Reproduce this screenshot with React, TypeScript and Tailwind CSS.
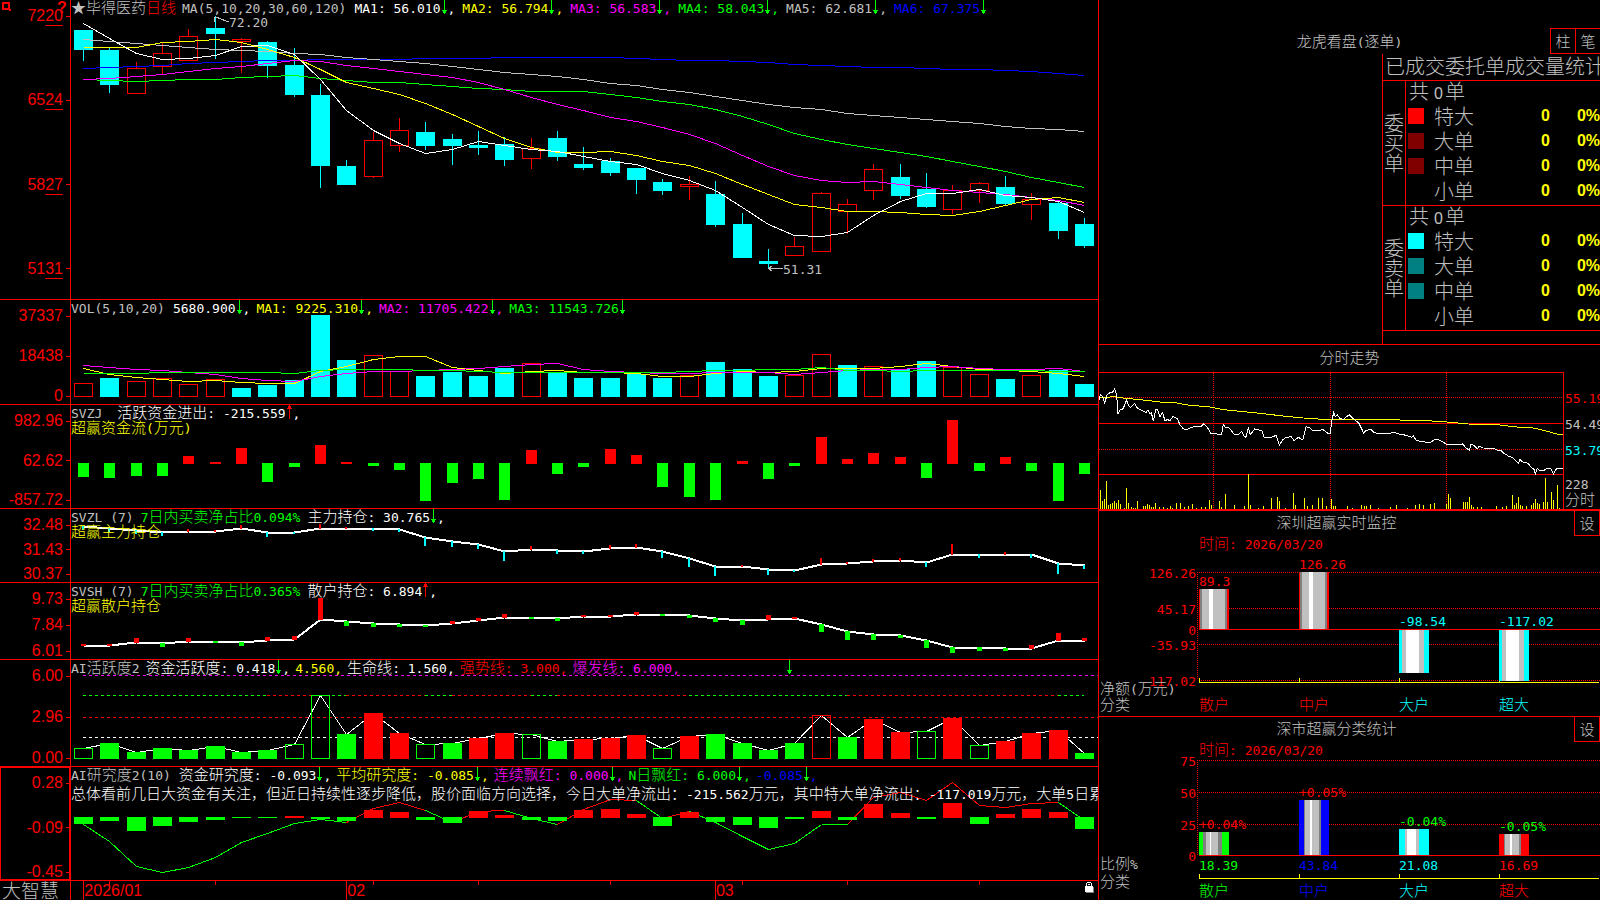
import type { ReactNode } from 'react';
import { clsx } from 'clsx';

const RED = '#ff0000';
const CYAN = '#00ffff';
const GREEN = '#00ff00';
const YELLOW = '#ffff00';
const MAGENTA = '#ff00ff';
const BLUE = '#0000ff';
const SILVER = '#c0c0c0';
const GRAY = '#808080';
const WHITE = '#ffffff';

const PLOT_W = 1027;
const cx = (i: number) => 12 + Math.round(26.34 * i);

// [kind, high, open/close top, open/close bottom, low]
const candles: [string, number, number, number, number][] = [
  ['c', 30, 30, 50, 61], ['c', 47, 50, 85, 93], ['r', 62, 68, 93, 93], ['r', 42, 53, 66, 74], ['r', 29, 36, 60, 60],
  ['c', 16, 28, 34, 59], ['r', 38, 39, 41, 73], ['c', 41, 42, 66, 78], ['c', 48, 65, 95, 97], ['c', 84, 95, 166, 188],
  ['c', 160, 166, 185, 185], ['r', 132, 140, 176, 178], ['r', 118, 130, 145, 152], ['c', 122, 132, 146, 150], ['c', 134, 139, 146, 165],
  ['c', 131, 145, 148, 155], ['c', 137, 144, 160, 166], ['r', 138, 148, 158, 169], ['c', 131, 138, 157, 161], ['c', 147, 164, 168, 170],
  ['c', 158, 161, 173, 176], ['c', 168, 168, 180, 194], ['c', 179, 182, 191, 195], ['r', 176, 184, 186, 200], ['c', 181, 194, 225, 227],
  ['c', 213, 224, 258, 258], ['c', 249, 261, 264, 268], ['r', 237, 246, 255, 255], ['r', 192, 193, 251, 251], ['r', 199, 204, 211, 234],
  ['r', 164, 169, 190, 200], ['c', 164, 177, 196, 199], ['c', 173, 189, 207, 208], ['r', 185, 190, 209, 214], ['r', 182, 183, 190, 203],
  ['c', 176, 187, 204, 205], ['r', 193, 199, 204, 220], ['c', 201, 203, 231, 239], ['c', 218, 224, 246, 248],
];

const priceLines: [string, number[]][] = [
  [BLUE, [68, 67, 66, 65, 63, 62, 61, 60, 60, 59, 59, 59, 59, 58, 58, 58, 57, 57, 57, 57, 57, 58, 59, 60, 60, 61, 62, 64, 65, 66, 67, 67, 68, 69, 69, 70, 71, 73, 75]],
  [SILVER, [39, 41, 43, 45, 47, 49, 50, 51, 53, 54, 57, 59, 61, 63, 66, 69, 72, 74, 76, 79, 83, 85, 89, 92, 96, 100, 104, 107, 109, 113, 115, 117, 119, 121, 123, 126, 128, 129, 131]],
  [GREEN, [79, 80, 81, 80, 79, 79, 77, 76, 75, 78, 80, 82, 82, 84, 86, 88, 89, 91, 91, 91, 94, 97, 101, 104, 109, 116, 124, 133, 139, 144, 148, 152, 156, 161, 166, 171, 177, 182, 187]],
  [MAGENTA, [79, 78, 76, 74, 71, 68, 66, 63, 60, 61, 65, 68, 71, 74, 77, 82, 89, 97, 104, 110, 117, 121, 127, 134, 143, 155, 166, 175, 180, 182, 181, 184, 187, 190, 192, 194, 197, 200, 205]],
  [YELLOW, [47, 47, 47, 42, 41, 39, 42, 49, 57, 69, 82, 88, 94, 103, 114, 126, 138, 147, 152, 152, 151, 155, 161, 165, 173, 184, 194, 204, 207, 211, 211, 212, 214, 215, 211, 205, 199, 197, 202]],
  [WHITE, [23, 38, 53, 59, 58, 55, 46, 45, 54, 79, 110, 130, 143, 153, 149, 141, 145, 149, 151, 156, 161, 164, 173, 180, 190, 207, 224, 235, 236, 232, 215, 201, 193, 193, 189, 195, 197, 201, 212]],
];

const volumeTops = [83, 78, 81, 78, 84, 79, 88, 85, 80, 15, 60, 55, 71, 76, 72, 76, 68, 63, 72, 78, 78, 74, 78, 75, 62, 69, 76, 75, 54, 65, 66, 69, 61, 67, 74, 79, 75, 70, 84];
const volumeUp = [0, 2, 3, 4, 5, 11, 12, 17, 23, 27, 28, 30, 33, 34, 36];

const volumeLines: [string, number[]][] = [
  [YELLOW, [68, 74, 77, 79, 81, 80, 82, 83, 83, 71, 66, 59, 56, 56, 67, 70, 73, 71, 70, 72, 72, 73, 76, 76, 73, 71, 72, 71, 68, 68, 68, 66, 63, 66, 69, 70, 71, 73, 76]],
  [MAGENTA, [65, 67, 69, 70, 72, 74, 78, 80, 81, 76, 73, 71, 71, 70, 69, 68, 66, 64, 63, 69, 71, 72, 73, 73, 72, 72, 72, 74, 72, 70, 69, 69, 67, 66, 68, 69, 69, 68, 71]],
  [GREEN, [73, 73, 73, 72, 72, 72, 72, 72, 73, 70, 69, 69, 69, 70, 70, 71, 72, 72, 72, 72, 72, 72, 72, 71, 70, 70, 69, 69, 67, 70, 70, 71, 70, 70, 70, 70, 70, 71, 71]],
];

const flowEnds = [72, 73, 71, 71, 51, 57, 43, 77, 62, 40, 57, 61, 65, 96, 78, 74, 95, 45, 69, 62, 44, 50, 82, 92, 95, 56, 74, 61, 32, 54, 48, 52, 73, 15, 66, 52, 66, 96, 69];

const mainLine = [17, 19, 21, 23, 22, 22, 19, 23, 23, 19, 19, 19, 20, 28, 32, 35, 42, 40, 41, 42, 39, 38, 42, 49, 57, 57, 60, 61, 55, 54, 52, 51, 53, 45, 45, 45, 45, 54, 56];
// end of the tick hanging from each point of the line
const mainTicks = [20, 22, 24, 26, 20, 21, 16, 27, 24, 15, 18, 21, 22, 36, 37, 39, 51, 37, 44, 44, 36, 35, 48, 57, 66, 56, 65, 62, 49, 53, 50, 49, 57, 35, 48, 43, 48, 64, 59];

const retailLine = [62, 62, 59, 60, 58, 58, 59, 57, 56, 36, 38, 40, 41, 42, 40, 37, 34, 34, 35, 33, 33, 31, 31, 32, 35, 37, 36, 35, 41, 48, 51, 52, 57, 64, 64, 65, 65, 57, 57];
const retailTicks = [61, 61, 55, 63, 55, 59, 62, 54, 53, 15, 42, 43, 43, 43, 38, 35, 31, 35, 37, 32, 32, 29, 32, 34, 38, 41, 32, 34, 48, 56, 56, 54, 64, 69, 67, 67, 62, 50, 55];

const activity = [88, 83, 92, 88, 90, 86, 92, 90, 84, 35, 74, 53, 73, 84, 83, 78, 73, 74, 81, 79, 78, 75, 88, 76, 74, 83, 90, 83, 55, 77, 59, 72, 71, 58, 85, 81, 73, 70, 93];
const activityRed = [11, 12, 15, 16, 19, 20, 21, 23, 28, 30, 31, 33, 35, 36, 37];
const activityHollow = [0, 8, 9, 13, 17, 22, 28, 32, 34];
// colour runs of the upper dashed line, as column ranges
const activityRuns: [number, number, string][] = [
  [0, 7, GREEN], [7, 9, RED], [9, 10, GREEN], [10, 13, RED], [13, 14, GREEN], [14, 17, RED],
  [17, 18, GREEN], [18, 23, RED], [23, 29, GREEN], [29, 37, RED], [37, 38, GREEN],
];

const researchEnds = [57, 54, 64, 59, 55, 53, 51, 51, 49, 52, 54, 43, 45, 53, 56, 44, 48, 53, 54, 43, 42, 47, 59, 45, 55, 58, 61, 52, 44, 53, 37, 46, 52, 36, 57, 47, 42, 45, 62];
const researchLine = [57, 74, 99, 105, 100, 90, 75, 66, 56, 52, 55, 41, 35, 43, 55, 44, 43, 51, 57, 42, 32, 33, 51, 44, 55, 69, 82, 76, 57, 57, 30, 25, 33, 15, 38, 40, 36, 35, 53];
const researchGreen = [0, 1, 2, 3, 4, 5, 6, 7, 8, 9, 13, 16, 17, 21, 23, 24, 25, 26, 27, 28, 37];

const intradayAvg = '27,173 75,170 100,174 160,180 210,186 260,189 300,196 355,200 400,209 470,216 520,221 570,227 640,234 700,238 890,239 1010,242 1070,246 1135,252 1230,255 1280,261 1330,264 1365,272 1400,282 1418,283';
const intradayPrice =
  '27,180 31,163 38,170 44,188 52,163 60,158 68,156 74,146 80,165 84,221 90,210 98,208 104,195 109,179 116,197 122,203 134,190 142,204 150,208 160,213 168,218 174,210 180,222 184,218 190,243 197,208 203,210 210,230 218,218 225,243 232,238 240,243 248,230 262,235 270,255 280,266 290,270 303,262 315,260 335,258 341,252 352,262 362,280 372,279 383,283 395,282 400,253 406,262 418,264 432,282 445,283 455,275 462,288 468,292 475,262 481,284 494,267 516,272 522,292 545,292 558,286 568,315 578,300 588,292 604,290 612,302 625,292 638,300 648,260 660,264 668,273 688,272 698,268 712,279 720,282 726,240 731,218 736,230 742,225 750,235 760,238 778,224 790,236 800,244 808,252 821,279 828,272 842,268 852,277 865,282 885,279 895,282 910,277 930,283 950,286 965,292 970,288 978,300 990,304 1020,308 1035,298 1048,300 1058,306 1070,313 1118,312 1128,324 1138,331 1143,313 1152,316 1162,326 1168,318 1180,324 1210,325 1222,331 1232,330 1242,340 1255,348 1270,354 1285,370 1290,358 1298,366 1314,370 1325,384 1332,388 1336,402 1342,385 1350,392 1360,392 1368,387 1383,386 1390,402 1397,388 1405,385 1418,385';
const intradayVolume: [number, number][] = [
  [30, 450], [36, 482], [42, 477], [48, 423], [54, 495], [60, 492], [66, 489], [72, 483], [78, 489], [84, 480], [90, 492], [102, 504], [108, 444], [114, 489], [123, 500], [129, 504], [135, 504], [141, 483],
  [159, 498], [165, 498], [171, 492], [177, 495], [183, 500], [189, 500], [195, 489], [207, 500], [219, 502], [231, 504], [240, 498], [246, 504], [258, 489], [270, 489], [282, 502], [294, 498], [306, 492], [318, 504], [333, 502], [345, 502],
  [357, 480], [363, 495], [387, 483], [393, 500], [405, 462], [432, 495], [462, 498], [474, 402], [480, 495], [504, 504], [519, 498], [543, 474], [561, 471], [567, 483], [585, 504], [609, 459], [615, 495], [642, 474], [651, 498], [666, 495],
  [684, 474], [696, 474], [708, 498], [723, 477], [729, 498], [735, 498], [771, 498], [786, 504], [813, 495], [822, 498], [828, 498], [840, 495], [864, 504], [900, 500], [918, 495], [951, 504], [975, 495], [987, 492], [999, 495], [1020, 492], [1032, 489],
  [1068, 492], [1074, 462], [1080, 474], [1119, 486], [1125, 486], [1131, 486], [1137, 471], [1143, 495], [1149, 500], [1161, 502], [1173, 500], [1218, 498], [1236, 500], [1248, 498], [1266, 465], [1272, 495], [1278, 489], [1284, 471], [1290, 495],
  [1296, 498], [1308, 498], [1323, 495], [1329, 489], [1335, 477], [1341, 489], [1347, 492], [1359, 486], [1365, 414], [1371, 486], [1383, 456], [1389, 480], [1401, 435], [1407, 504],
];

const split = (text: string) => text.split(/([\x20-\x7e]+)/).filter(Boolean);
const isLatin = (s: string) => /^[\x20-\x7e]/.test(s);

// Chinese at 15px with half-width runs in a mono face next to it
function Song({ text }: { text: string }) {
  return (
    <>
      {split(text).map((s, i) =>
        isLatin(s) ? <span key={i} className="font-['DejaVu_Sans_Mono',monospace] text-[13px] leading-none">{s}</span> : s
      )}
    </>
  );
}

function SvgSong({ x, y, fill, end, text }: { x: number; y: number; fill: string; end?: boolean; text: string }) {
  return (
    <text x={x} y={y} fill={fill} textAnchor={end ? 'end' : 'start'} className="text-[15px]">
      {split(text).map((s, i) =>
        isLatin(s) ? <tspan key={i} className="font-['DejaVu_Sans_Mono',monospace] text-[13px]">{s}</tspan> : <tspan key={i}>{s}</tspan>
      )}
    </text>
  );
}

function Arrow({ up }: { up?: boolean }) {
  return (
    <svg viewBox="0 0 5 14" className="mx-px h-[14px] w-[5px] shrink-0" shapeRendering="crispEdges" fill={up ? RED : GREEN}>
      <path d={up ? 'M2 0h1v14H2zM1 2h3v1H1zM0 3h5v1H0zM1 1h3v1H1z' : 'M2 0h1v14H2zM1 11h3v1H1zM0 10h5v1H0zM1 12h3v1H1z'} />
    </svg>
  );
}

interface SegProps {
  text: string;
  className: string;
  dir?: 'up' | 'down';
  tail?: boolean;
}

function Seg({ text, className, dir, tail }: SegProps) {
  return (
    <span className={clsx('flex shrink-0', className)}>
      <span><Song text={text} /></span>
      {dir && <Arrow up={dir === 'up'} />}
      {tail && <span><Song text="," /></span>}
    </span>
  );
}

function Axis({ labels, className, underline }: { labels: string[]; className?: string; underline?: boolean }) {
  return (
    <div className={clsx("flex w-[70px] shrink-0 flex-col justify-between pt-2 font-['Liberation_Sans',sans-serif] text-base font-normal leading-4 text-[#f00]", className)}>
      {labels.map((l) => (
        <div key={l} className="flex h-4 items-center justify-end gap-[3px]">
          {underline ? (
            <span>{l.slice(0, 2)}<span className="underline underline-offset-4">{l.slice(2)}</span></span>
          ) : (
            <span>{l}</span>
          )}
          <span className="h-px w-1 bg-[#f00]" />
        </div>
      ))}
    </div>
  );
}

interface PanelProps {
  height: number;
  labels: string[];
  axisClass?: string;
  underline?: boolean;
  header: ReactNode;
  children: ReactNode;
  extra?: ReactNode;
}

function Panel({ height, labels, axisClass, underline, header, children, extra }: PanelProps) {
  return (
    <section className="relative flex min-h-0 overflow-hidden border-b border-[#f00]">
      <Axis labels={labels} className={axisClass} underline={underline} />
      <div className="relative grid min-w-0 flex-1 overflow-hidden border-l border-[#f00]">
        <svg viewBox={`0 0 ${PLOT_W} ${height}`} preserveAspectRatio="none" shapeRendering="crispEdges" className="col-start-1 row-start-1 h-full min-h-0 w-full" fill="none">
          {children}
        </svg>
        <div className="col-start-1 row-start-1 min-w-0 overflow-hidden whitespace-pre leading-[13px]">{header}</div>
      </div>
      {extra}
    </section>
  );
}

function Line({ ys, color, width = 1 }: { ys: number[]; color: string; width?: number }) {
  return <polyline points={ys.map((y, i) => `${cx(i) + 0.5},${y + 0.5}`).join(' ')} stroke={color} strokeWidth={width} />;
}

function Box({ i, top, bottom, color, hollow, w = 19 }: { i: number; top: number; bottom: number; color: string; hollow?: boolean; w?: number }) {
  const x = cx(i) - Math.floor(w / 2);
  if (hollow) return <rect x={x + 0.5} y={top + 0.5} width={w - 1} height={Math.max(bottom - top - 1, 1)} stroke={color} />;
  return <rect x={x} y={top} width={w} height={Math.max(bottom - top, 1)} fill={color} />;
}

function Ticks({ line, ends, down, w }: { line: number[]; ends: number[]; down: string; w: number }) {
  return (
    <>
      {line.map((y, i) => (
        <Box key={i} i={i} w={w} top={Math.min(y, ends[i])} bottom={Math.max(y, ends[i]) + 1} color={ends[i] < y ? RED : down} />
      ))}
    </>
  );
}

function Dashed({ y, color, from = 12, to = PLOT_W }: { y: number; color: string; from?: number; to?: number }) {
  return <line x1={from} x2={to} y1={y + 0.5} y2={y + 0.5} stroke={color} strokeDasharray="3 3" />;
}

function PricePanel() {
  return (
    <Panel
      height={299}
      labels={['7220', '6524', '5827', '5131']}
      axisClass="pb-[22px]"
      underline
      header={
        <div className="flex">
          <Seg className="text-[#c0c0c0]" text="★毕得医药" />
          <Seg className="text-[#f00]" text="日线" />
          <Seg className="ml-[6px] mr-2 text-[#c0c0c0]" text="MA(5,10,20,30,60,120)" />
          <Seg className="mr-[7px] text-white" text="MA1: 56.010" dir="down" tail />
          <Seg className="mr-[7px] text-[#ff0]" text="MA2: 56.794" dir="down" tail />
          <Seg className="mr-[7px] text-[#f0f]" text="MA3: 56.583" dir="down" tail />
          <Seg className="mr-[7px] text-[#0f0]" text="MA4: 58.043" dir="down" tail />
          <Seg className="mr-[7px] text-[#c0c0c0]" text="MA5: 62.681" dir="down" tail />
          <Seg className="text-[#00f]" text="MA6: 67.375" dir="down" />
        </div>
      }
      extra={
        <>
          <svg viewBox="0 0 9 9" className="absolute left-[2px] top-[2px] h-[9px] w-[9px]" fill="none" stroke={RED} strokeWidth="2" shapeRendering="crispEdges">
            <path d="M1 1h6v6H1zM7 7l2 2" />
          </svg>
          <span className="absolute left-[57px] top-0 font-['Liberation_Sans',sans-serif] text-base font-bold leading-4 text-[#f00]">?</span>
        </>
      }
    >
      {candles.map(([kind, high, top, bottom, low], i) => {
        const color = kind === 'c' ? CYAN : RED;
        return (
          <g key={i}>
            <rect x={cx(i)} y={high} width={1} height={top - high} fill={color} />
            <rect x={cx(i)} y={bottom} width={1} height={low - bottom} fill={color} />
            <Box i={i} top={top} bottom={kind === 'c' ? bottom : bottom + 1} color={color} hollow={kind === 'r'} />
          </g>
        );
      })}
      {priceLines.map(([color, ys]) => <Line key={color} ys={ys} color={color} />)}
      <path d="M143.5 17v5M143.5 17h4M144 17l14 5" stroke={SILVER} />
      <path d="M697 268.5h15M697.5 268.5l4-3M697.5 268.5l4 3" stroke={SILVER} />
      <SvgSong x={158} y={27} fill={SILVER} text="72.20" />
      <SvgSong x={712} y={274} fill={SILVER} text="51.31" />
    </Panel>
  );
}

function VolumePanel() {
  return (
    <Panel
      height={104}
      labels={['37337', '18438', '0']}
      header={
        <div className="flex">
          <Seg className="mr-2 text-[#c0c0c0]" text="VOL(5,10,20)" />
          <Seg className="mr-[6px] text-white" text="5680.900" dir="down" tail />
          <Seg className="mr-[6px] text-[#ff0]" text="MA1: 9225.310" dir="down" tail />
          <Seg className="mr-[6px] text-[#f0f]" text="MA2: 11705.422" dir="down" tail />
          <Seg className="text-[#0f0]" text="MA3: 11543.726" dir="down" />
        </div>
      }
    >
      {volumeTops.map((top, i) => {
        const up = volumeUp.includes(i);
        return <Box key={i} i={i} top={top} bottom={97} color={up ? RED : CYAN} hollow={up} />;
      })}
      {volumeLines.map(([color, ys]) => <Line key={color} ys={ys} color={color} />)}
    </Panel>
  );
}

function FlowPanel() {
  return (
    <Panel
      height={103}
      labels={['982.96', '62.62', '-857.72']}
      header={
        <>
          <div className="flex">
            <Seg className="mr-[15px] text-[#c0c0c0]" text="SVZJ" />
            <Seg className="text-white" text="活跃资金进出: -215.559" dir="up" tail />
          </div>
          <div className="text-[#ff0]"><Song text="超赢资金流(万元)" /></div>
        </>
      }
    >
      {flowEnds.map((y, i) => (
        <Box key={i} i={i} w={11} top={Math.min(y, 58)} bottom={y < 58 ? 59 : y} color={y < 58 ? RED : GREEN} />
      ))}
    </Panel>
  );
}

function HoldPanel({ retail }: { retail?: boolean }) {
  const line = retail ? retailLine : mainLine;
  return (
    <Panel
      height={retail ? 76 : 73}
      labels={retail ? ['9.73', '7.84', '6.01'] : ['32.48', '31.43', '30.37']}
      header={
        <>
          <div className="flex gap-[7px]">
            <Seg className="text-[#c0c0c0]" text={retail ? 'SVSH (7)' : 'SVZL (7)'} />
            <Seg className="text-[#0f0]" text={retail ? '7日内买卖净占比0.365%' : '7日内买卖净占比0.094%'} />
            <Seg className="text-white" text={retail ? '散户持仓: 6.894' : '主力持仓: 30.765'} dir={retail ? 'up' : 'down'} tail />
          </div>
          <div className="text-[#ff0]"><Song text={retail ? '超赢散户持仓' : '超赢主力持仓'} /></div>
        </>
      }
    >
      <Line ys={line} color={WHITE} width={2} />
      {retail ? <Ticks line={line} ends={retailTicks} down={GREEN} w={5} /> : <Ticks line={line} ends={mainTicks} down={CYAN} w={2} />}
    </Panel>
  );
}

function ActivityPanel() {
  return (
    <Panel
      height={106}
      labels={['6.00', '2.96', '0.00']}
      header={
        <div className="flex gap-[5px]">
          <Seg className="mr-px text-[#c0c0c0]" text="AI活跃度2" />
          <Seg className="text-white" text="资金活跃度: 0.418" dir="down" tail />
          <Seg className="text-[#ff0]" text="4.560," />
          <Seg className="text-white" text="生命线: 1.560," />
          <Seg className="text-[#f00]" text="强势线: 3.000," />
          <Seg className="text-[#f0f]" text="爆发线: 6.000," />
          <span className="ml-[101px]"><Arrow /></span>
        </div>
      }
    >
      <Dashed y={15} color={MAGENTA} />
      <Dashed y={57} color={RED} />
      <Dashed y={77} color={WHITE} />
      {activityRuns.map(([a, b, color]) => <Dashed key={a} y={35} from={cx(a)} to={cx(b)} color={color} />)}
      <Line ys={activity} color={WHITE} />
      {activity.map((top, i) => (
        <Box key={i} i={i} top={top} bottom={99} color={activityRed.includes(i) ? RED : GREEN} hollow={activityHollow.includes(i)} />
      ))}
    </Panel>
  );
}

function ResearchPanel() {
  return (
    <Panel
      height={113}
      labels={['0.28', '-0.09', '-0.45']}
      axisClass="outline outline-[#f00] -outline-offset-1"
      header={
        <>
          <div className="flex gap-[5px]">
            <Seg className="mr-[3px] text-[#c0c0c0]" text="AI研究度2(10)" />
            <Seg className="text-white" text="资金研究度: -0.093" dir="down" tail />
            <Seg className="text-[#ff0]" text="平均研究度: -0.085" dir="down" tail />
            <Seg className="text-[#f0f]" text="连续飘红: 0.000" dir="down" tail />
            <Seg className="text-[#0f0]" text="N日飘红: 6.000" dir="down" tail />
            <Seg className="text-[#00f]" text="-0.085" dir="down" tail />
          </div>
          <p className="mt-1 text-white">
            <Song text="总体看前几日大资金有关注，但近日持续性逐步降低，股价面临方向选择，今日大单净流出：-215.562万元，其中特大单净流出：-117.019万元，大单5日累" />
          </p>
        </>
      }
    >
      {researchLine.slice(1).map((y, i) => (
        <line key={i} x1={cx(i) + 0.5} y1={researchLine[i] + 0.5} x2={cx(i + 1) + 0.5} y2={y + 0.5} stroke={researchGreen.includes(i) ? GREEN : RED} />
      ))}
      {researchEnds.map((y, i) => (
        <Box key={i} i={i} top={Math.min(y, 50)} bottom={y < 50 ? 51 : y} color={y < 50 ? RED : GREEN} />
      ))}
    </Panel>
  );
}

function DateBar() {
  return (
    <footer className="flex min-h-0 overflow-hidden text-[#f00]">
      <div className="w-[70px] shrink-0 whitespace-nowrap pl-[2px] text-[19px] leading-[17px] text-[#c0c0c0]">大智慧</div>
      <div className="relative min-w-0 flex-1 border-l border-[#f00] font-['Liberation_Sans',sans-serif] text-base font-normal leading-5">
        <svg viewBox={`0 0 ${PLOT_W} 19`} preserveAspectRatio="none" shapeRendering="crispEdges" className="h-full w-full" fill={RED}>
          {[0, 10, 24].map((i) => <rect key={i} x={cx(i)} y={0} width={1} height={19} />)}
          {[1, 5, 11, 15, 20, 25, 29, 34].map((i) => <rect key={i} x={cx(i)} y={0} width={1} height={4} />)}
        </svg>
        <time className="absolute left-[1.3%] top-0">2026/01</time>
        <time className="absolute left-[26.9%] top-0">02</time>
        <time className="absolute left-[62.8%] top-0">03</time>
        <svg viewBox="0 0 10 11" className="absolute right-[3px] top-px h-[11px] w-[10px]" shapeRendering="crispEdges">
          <path d="M2 0h4v1H2zM1 1h1v3H1zM6 1h1v3H6zM3 2h2v1H3z" fill={WHITE} />
          <path d="M0 4h8v6H0z" fill={WHITE} />
          <path d="M8 5h1v5H8zM1 10h8v1H1z" fill={GRAY} />
        </svg>
      </div>
    </footer>
  );
}

interface OrderRow {
  name: string;
  swatch: string;
}

const buyRows: OrderRow[] = [
  { name: '特大', swatch: 'bg-[#f00]' },
  { name: '大单', swatch: 'bg-[#800000]' },
  { name: '中单', swatch: 'bg-[#800000]' },
  { name: '小单', swatch: '' },
];
const sellRows: OrderRow[] = [
  { name: '特大', swatch: 'bg-[#0ff]' },
  { name: '大单', swatch: 'bg-[#008080]' },
  { name: '中单', swatch: 'bg-[#008080]' },
  { name: '小单', swatch: '' },
];

function OrderGroup({ side, rows }: { side: string; rows: OrderRow[] }) {
  const num = "h-[25px] p-0 text-right align-top font-['Liberation_Sans',sans-serif] text-base font-bold leading-5 text-[#ff0]";
  return (
    <tbody>
      <tr>
        <th rowSpan={5} scope="rowgroup" className="border-b border-r border-[#f00] p-0 font-light">
          {side.split('').map((c) => <span key={c} className="block">{c}</span>)}
        </th>
        <td colSpan={4} className="h-[25px] p-0 pl-[3px] align-top">
          共<b className="ml-[5px] mr-[2px] font-['Liberation_Sans',sans-serif] text-base leading-none">0</b>单
        </td>
      </tr>
      {rows.map((r, i) => {
        const edge = i === rows.length - 1 && 'border-b border-[#f00]';
        return (
          <tr key={r.name}>
            <td className={clsx('h-[25px] p-0 pl-[2px] pt-[2px] align-top', edge)}><span className={clsx('block h-4 w-4', r.swatch)} /></td>
            <td className={clsx('h-[25px] p-0 pl-1 align-top', edge)}>{r.name}</td>
            <td className={clsx(num, edge)}>0</td>
            <td className={clsx(num, edge)}>0%</td>
          </tr>
        );
      })}
    </tbody>
  );
}

function OrdersPanel() {
  return (
    <section className="flex min-h-0 flex-col overflow-hidden border-b border-[#f00] text-[#c0c0c0]">
      <header className="mt-7 flex h-[26px] shrink-0 items-center">
        <h2 className="flex-1 whitespace-nowrap pl-[50px] text-center"><Song text="龙虎看盘(逐单)" /></h2>
        <button type="button" className="h-full w-[25px] border-y border-l border-[#f00]">柱</button>
        <button type="button" className="h-full w-[25px] border-y border-l border-[#f00]">笔</button>
      </header>
      <div className="flex flex-1 justify-end">
        <div className="w-[218px] border-l border-[#f00] text-[20px] leading-5">
          <h3 className="h-[27px] overflow-hidden whitespace-nowrap border-b border-[#f00] pl-[2px] pt-[2px]">已成交委托单成交量统计</h3>
          <table className="w-full table-fixed border-separate border-spacing-0">
            <colgroup>
              <col className="w-[23px]" />
              <col className="w-[24px]" />
              <col className="w-[60px]" />
              <col className="w-[60px]" />
              <col />
            </colgroup>
            <OrderGroup side="委买单" rows={buyRows} />
            <OrderGroup side="委卖单" rows={sellRows} />
          </table>
        </div>
      </div>
    </section>
  );
}

function IntradayPanel() {
  return (
    <section className="flex min-h-0 flex-col overflow-hidden border-b-2 border-[#f00] text-[#c0c0c0]">
      <h2 className="h-[27px] shrink-0 text-center leading-[23px]">分时走势</h2>
      <div className="flex min-h-0 flex-1">
        <svg viewBox="27 96 1395 411" preserveAspectRatio="none" shapeRendering="crispEdges" className="h-full min-w-0 flex-1" fill="none" strokeWidth="3">
          <path d="M27 97.5H1420.500V507M27 250.500H1420M27 403.500H1420" stroke={RED} />
          <path d="M27 172.500H1420M27 328.500H1420M370.500 99V507M721.500 99V507M1069.500 99V507" stroke={RED} strokeDasharray="3 3" />
          {intradayVolume.map(([x, top]) => <rect key={x} x={x} y={top} width={3} height={507 - top} fill={YELLOW} />)}
          <polyline points={intradayAvg} stroke={YELLOW} />
          <polyline points={intradayPrice} stroke={WHITE} />
        </svg>
        <div className="flex w-9 shrink-0 flex-col overflow-hidden pl-px pt-4 leading-[18px]">
          <span className="mb-2 h-[18px] text-[#f00]"><Song text="55.19" /></span>
          <span className="mb-2 h-[18px]"><Song text="54.49" /></span>
          <span className="mb-4 h-[18px] text-[#0ff]"><Song text="53.79" /></span>
          <span className="h-[18px]"><Song text="228" /></span>
          <span className="whitespace-nowrap leading-[14px]">分时</span>
        </div>
      </div>
    </section>
  );
}

interface StatBar {
  name: string;
  color: string;
  top: number;
  height: number;
  stripes: number[]; // widths, outer colour first
  label: string;
  labelY: number;
  labelColor: string;
  value?: string;
}

// stripe shades for a 7-part and a 5-part cylinder
const shades7 = (c: string) => [c, GRAY, SILVER, WHITE, SILVER, GRAY, c];
const shades5 = (c: string) => [c, SILVER, WHITE, SILVER, c];

function Cylinder({ x, bar }: { x: number; bar: StatBar }) {
  const fills = bar.stripes.length === 7 ? shades7(bar.color) : shades5(bar.color);
  return (
    <>
      {bar.stripes.map((w, i) => (
        <rect key={i} x={x + bar.stripes.slice(0, i).reduce((a, b) => a + b, 0)} y={bar.top} width={w} height={bar.height} fill={fills[i]} />
      ))}
    </>
  );
}

interface StatProps {
  title: string;
  height: number;
  grid: [number, string, number][]; // y, label, 1 when the line is solid
  axisY: number;
  nameY: number;
  valueY?: number;
  unit: [string, number];
  kindY: number;
  bars: StatBar[];
  last?: boolean;
}

function StatPanel({ title, height, grid, axisY, nameY, valueY = 0, unit, kindY, bars, last }: StatProps) {
  const ys = grid.map(([y]) => y);
  return (
    <section className={clsx('flex min-h-0 flex-col overflow-hidden text-[#c0c0c0]', !last && 'border-b border-[#f00]')}>
      <header className="flex h-[25px] shrink-0">
        <h2 className="flex-1 text-center leading-[21px]">{title}</h2>
        <button type="button" className="w-[26px] border-x border-b border-[#f00]">设</button>
      </header>
      <svg viewBox={`0 0 501 ${height}`} preserveAspectRatio="xMinYMin meet" shapeRendering="crispEdges" className="min-h-0 w-full flex-1">
        {grid.map(([y, label, solid]) => (
          <g key={label}>
            <line x1={100} x2={501} y1={y + 0.5} y2={y + 0.5} stroke={RED} strokeDasharray={solid ? undefined : '1 1'} />
            <SvgSong x={97} y={y + 6} end fill={RED} text={label} />
          </g>
        ))}
        <line x1={98.5} x2={98.5} y1={Math.min(...ys)} y2={Math.max(...ys)} stroke={RED} strokeDasharray="1 1" />
        <SvgSong x={100} y={13} fill={RED} text="时间: 2026/03/20" />
        <path d={`M100 ${axisY + 0.5}H500M100.500 ${axisY}v-4M200.500 ${axisY}v-4M300.500 ${axisY}v-4M400.500 ${axisY}v-4`} stroke={YELLOW} fill="none" />
        {bars.map((b, i) => (
          <g key={b.name}>
            <Cylinder x={100 + i * 100} bar={b} />
            <SvgSong x={100 + i * 100} y={b.labelY} fill={b.labelColor} text={b.label} />
            {b.value && <SvgSong x={100 + i * 100} y={valueY} fill={b.color} text={b.value} />}
            <SvgSong x={100 + i * 100} y={nameY} fill={b.color} text={b.name} />
          </g>
        ))}
        <SvgSong x={1} y={unit[1]} fill={SILVER} text={unit[0]} />
        <SvgSong x={1} y={kindY} fill={SILVER} text="分类" />
      </svg>
    </section>
  );
}

const monitorBars: StatBar[] = [
  { name: '散户', color: RED, top: 53, height: 40, stripes: [1, 2, 7, 4, 12, 2, 2], label: '89.3', labelY: 50, labelColor: RED },
  { name: '中户', color: RED, top: 36, height: 57, stripes: [1, 2, 7, 4, 12, 2, 2], label: '126.26', labelY: 33, labelColor: RED },
  { name: '大户', color: CYAN, top: 94, height: 43, stripes: [3, 4, 13, 5, 5], label: '-98.54', labelY: 90, labelColor: CYAN },
  { name: '超大', color: CYAN, top: 94, height: 51, stripes: [3, 4, 13, 5, 5], label: '-117.02', labelY: 90, labelColor: CYAN },
];

const ratioBars: StatBar[] = [
  { name: '散户', color: GREEN, top: 90, height: 23, stripes: [4, 3, 4, 1, 7, 4, 7], label: '+0.04%', labelY: 87, labelColor: RED, value: '18.39' },
  { name: '中户', color: BLUE, top: 58, height: 55, stripes: [5, 1, 5, 2, 7, 2, 8], label: '+0.05%', labelY: 55, labelColor: RED, value: '43.84' },
  { name: '大户', color: CYAN, top: 87, height: 26, stripes: [6, 2, 9, 3, 10], label: '-0.04%', labelY: 84, labelColor: GREEN, value: '21.08' },
  { name: '超大', color: RED, top: 92, height: 21, stripes: [5, 1, 5, 2, 7, 2, 8], label: '-0.05%', labelY: 89, labelColor: GREEN, value: '16.69' },
];

export default function App() {
  return (
    <div className="flex h-screen overflow-hidden bg-black font-['Noto_Sans_CJK_SC',sans-serif] text-[15px] font-light leading-4">
      <main className="grid min-w-0 flex-1 grid-rows-[300fr_105fr_104fr_74fr_77fr_107fr_114fr_19fr] border-r border-[#f00]">
        <PricePanel />
        <VolumePanel />
        <FlowPanel />
        <HoldPanel />
        <HoldPanel retail />
        <ActivityPanel />
        <ResearchPanel />
        <DateBar />
      </main>
      <aside className="grid w-[501px] shrink-0 grid-rows-[345fr_166fr_206fr_183fr]">
        <OrdersPanel />
        <IntradayPanel />
        <StatPanel
          title="深圳超赢实时监控"
          height={180}
          grid={[[36, '126.26', 0], [72, '45.17', 0], [93, '0', 1], [108, '-35.93', 0], [144, '-117.02', 0]]}
          axisY={146}
          nameY={174}
          unit={['净额(万元)', 158]}
          kindY={174}
          bars={monitorBars}
        />
        <StatPanel
          title="深市超赢分类统计"
          height={158}
          grid={[[18, '75', 0], [50, '50', 0], [82, '25', 0], [113, '0', 1]]}
          axisY={136}
          nameY={154}
          valueY={128}
          unit={['比例%', 127]}
          kindY={145}
          bars={ratioBars}
          last
        />
      </aside>
    </div>
  );
}
